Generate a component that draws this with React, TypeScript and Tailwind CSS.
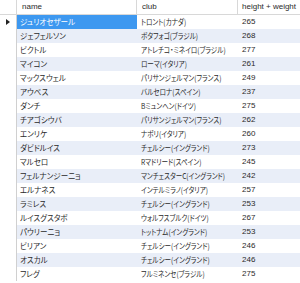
import React from "react";

const rows: [string, string, string][] = [
  ["ジュリオセザール", "トロント(カナダ)", "265"],
  ["ジェフェルソン", "ボタフォゴ(ブラジル)", "268"],
  ["ビクトル", "アトレチコ・ミネイロ(ブラジル)", "277"],
  ["マイコン", "ローマ(イタリア)", "261"],
  ["マックスウェル", "パリサンジェルマン(フランス)", "249"],
  ["アウベス", "バルセロナ(スペイン)", "237"],
  ["ダンチ", "Bミュンヘン(ドイツ)", "275"],
  ["チアゴシウバ", "パリサンジェルマン(フランス)", "262"],
  ["エンリケ", "ナポリ(イタリア)", "260"],
  ["ダビドルイス", "チェルシー(イングランド)", "273"],
  ["マルセロ", "Rマドリード(スペイン)", "245"],
  ["フェルナンジーニョ", "マンチェスターC(イングランド)", "242"],
  ["エルナネス", "インテルミラノ(イタリア)", "257"],
  ["ラミレス", "チェルシー(イングランド)", "253"],
  ["ルイスグスタボ", "ウォルフスブルク(ドイツ)", "267"],
  ["パウリーニョ", "トットナム(イングランド)", "253"],
  ["ビリアン", "チェルシー(イングランド)", "246"],
  ["オスカル", "チェルシー(イングランド)", "246"],
  ["フレグ", "フルミネンセ(ブラジル)", "275"],
];

const jp = "font-['Noto_Sans_CJK_JP',sans-serif] [font-feature-settings:'palt'] text-[8px]";
const lat = "font-['Liberation_Sans','Noto_Sans_CJK_JP',sans-serif] text-[8px]";

function JpText({ children, scale }: { children: React.ReactNode; scale: "name" | "club" }) {
  return (
    <span
      className={`inline-block whitespace-nowrap origin-left ${
        scale === "name" ? "scale-x-[0.94]" : "scale-x-[0.82]"
      }`}
    >
      {children}
    </span>
  );
}

export default function App() {
  return (
    <div className="w-[300px] h-[283px] bg-white overflow-hidden text-[#2a2a2a] leading-none">
      <div className="flex h-[15px] border-b border-[#d8d8d8] bg-white">
        <div className="w-[17px] shrink-0 border-r border-[#d8d8d8]" />
        <div className={`w-[120px] shrink-0 border-r border-[#d8d8d8] pl-[5px] flex items-center ${lat}`}>name</div>
        <div className={`w-[101px] shrink-0 border-r border-[#d8d8d8] pl-[5px] flex items-center ${lat}`}>club</div>
        <div className={`flex-1 pl-[4px] flex items-center ${lat}`}>height + weight</div>
      </div>
      {rows.map((r, i) => (
        <div key={i} className={`flex h-[14px] ${i % 2 === 1 ? "bg-[#e9eef8]" : "bg-white"}`}>
          <div className="w-[17px] shrink-0 bg-white border-r border-[#d0d0d0] flex items-center justify-center">
            {i === 0 && (
              <svg width="4" height="6" viewBox="0 0 4 6">
                <path d="M0 0 L4 3 L0 6 Z" fill="#222" />
              </svg>
            )}
          </div>
          <div
            className={`w-[120px] shrink-0 pl-[3px] flex items-center overflow-hidden ${jp} ${
              i === 0 ? "bg-[#3d98f0] text-white" : ""
            }`}
          >
            <JpText scale="name">{r[0]}</JpText>
          </div>
          <div className={`w-[101px] shrink-0 pl-[4px] flex items-center overflow-hidden ${jp}`}>
            <JpText scale="club">{r[1]}</JpText>
          </div>
          <div className={`flex-1 pl-[4px] flex items-center ${lat}`}>{r[2]}</div>
        </div>
      ))}
    </div>
  );
}
